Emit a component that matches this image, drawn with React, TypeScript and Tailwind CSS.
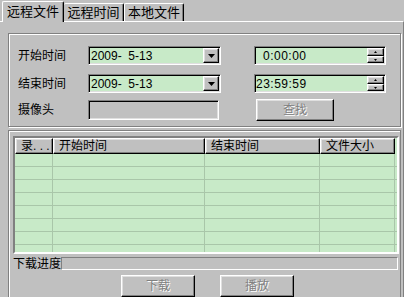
import React from 'react';

const sunken =
  'border border-t-[#808080] border-l-[#808080] border-b-white border-r-white shadow-[inset_1px_1px_0_#000,inset_-1px_-1px_0_#dfdfdf]';
const raised =
  'border border-t-white border-l-white border-b-black border-r-black shadow-[inset_-1px_-1px_0_#808080,inset_1px_1px_0_#dfdfdf]';
const etched = 'border border-[#808080] shadow-[inset_1px_1px_0_#fff,1px_1px_0_#fff]';

function DownArrow() {
  return (
    <svg width="7" height="4" viewBox="0 0 7 4">
      <path d="M0 0h7L3.5 4z" fill="#000" />
    </svg>
  );
}

function Combo({ value }: { value: string }) {
  return (
    <div className={`w-[133px] h-[19px] bg-[#c8eac8] flex items-center justify-between ${sunken}`}>
      <span className="pl-[2px] text-[12px] leading-none whitespace-pre">{value}</span>
      <div className={`w-[16px] h-[15px] mr-px bg-[#c0c0c0] flex items-center justify-center ${raised}`}>
        <DownArrow />
      </div>
    </div>
  );
}

function Spinner({ value, indent }: { value: string; indent: string }) {
  return (
    <div className={`w-[132px] h-[19px] bg-[#c8eac8] flex items-center justify-between ${sunken}`}>
      <span className={`${indent} text-[12px] leading-none tracking-[0.5px]`}>{value}</span>
      <div className="flex flex-col mr-px">
        <div className={`w-[17px] h-[8px] bg-[#c0c0c0] flex items-center justify-center ${raised}`}>
          <svg width="3" height="2" viewBox="0 0 3 2">
            <path d="M0 2h3L1.5 0z" fill="#000" />
          </svg>
        </div>
        <div className={`w-[17px] h-[7px] bg-[#c0c0c0] flex items-center justify-center ${raised}`}>
          <svg width="3" height="2" viewBox="0 0 3 2">
            <path d="M0 0h3L1.5 2z" fill="#000" />
          </svg>
        </div>
      </div>
    </div>
  );
}

function DisabledButton({ label, width }: { label: string; width: string }) {
  return (
    <div
      className={`${width} h-[22px] flex items-center justify-center bg-[#c0c0c0] text-[12px] text-[#808080] [text-shadow:1px_1px_0_#fff] ${raised}`}
    >
      {label}
    </div>
  );
}

const columns = [
  { title: '录. . .', w: 'w-[38px]' },
  { title: '开始时间', w: 'w-[152px]' },
  { title: '结束时间', w: 'w-[115px]' },
  { title: '文件大小', w: 'w-[75px]' },
];

export default function App() {
  const rows = Array.from({ length: 8 });

  return (
    <div className="w-[404px] h-[297px] overflow-hidden bg-[#c0c0c0] flex flex-col text-black [font-family:'Liberation_Sans','Noto_Sans_CJK_SC',sans-serif]">
      {/* tab strip */}
      <div className="h-[22px] pl-[2px] flex items-end">
        <div className="relative z-10 -mb-px w-[62px] h-[21px] bg-[#c0c0c0] border-l border-t border-r border-l-white border-t-white border-r-black rounded-t-[2px] shadow-[inset_-1px_0_0_#808080] flex items-start justify-center pt-[2px] text-[13px] leading-[16px]">
          远程文件
        </div>
        <div className="w-[60px] h-[18px] border-t border-r border-t-white border-r-black rounded-t-[2px] shadow-[inset_-1px_0_0_#808080] flex items-start justify-center pt-[1px] text-[13px] leading-[16px]">
          远程时间
        </div>
        <div className="w-[60px] h-[18px] border-l border-t border-r border-l-white border-t-white border-r-black rounded-t-[2px] shadow-[inset_-1px_0_0_#808080] flex items-start justify-center pt-[1px] text-[13px] leading-[16px]">
          本地文件
        </div>
      </div>

      {/* tab page */}
      <div className="flex-1 flex flex-col border-t border-t-white border-r border-r-[#808080] pl-[8px] pr-[2px] pt-[11px]">
        {/* query group */}
        <div className={`w-[393px] h-[94px] shrink-0 flex flex-col pt-[12px] pl-[9px] ${etched}`}>
          <div className="flex items-center h-[19px]">
            <span className="w-[70px] text-[12px]">开始时间</span>
            <Combo value="2009-  5-13" />
            <div className="w-[33px]" />
            <Spinner value="0:00:00" indent="pl-[8px]" />
          </div>
          <div className="flex items-center h-[19px] mt-[9px]">
            <span className="w-[70px] text-[12px]">结束时间</span>
            <Combo value="2009-  5-13" />
            <div className="w-[33px]" />
            <Spinner value="23:59:59" indent="pl-[1px]" />
          </div>
          <div className="flex items-center h-[21px] mt-[6px]">
            <span className="w-[70px] text-[12px]">摄像头</span>
            <div className={`w-[131px] h-[20px] bg-[#c0c0c0] ${sunken}`} />
            <div className="w-[37px]" />
            <DisabledButton label="查找" width="w-[78px]" />
          </div>
        </div>

        {/* result area */}
        <div className="mt-[3px] w-[393px] flex-1 flex flex-col border-t border-l border-r border-[#808080] shadow-[inset_1px_1px_0_#fff] pt-[5px] pl-[4px]">
          <div className="w-[386px] h-[118px] shrink-0 bg-[#c8eac8] overflow-hidden flex flex-col border-2 border-t-[#808080] border-l-[#808080] border-b-white border-r-white">
            <div className="flex h-[16px] shrink-0 bg-[#c0c0c0] w-fit">
              {columns.map((c) => (
                <div
                  key={c.title}
                  className={`${c.w} h-[16px] flex items-center pl-[5px] text-[12px] leading-none whitespace-pre ${raised}`}
                >
                  {c.title}
                </div>
              ))}
            </div>
            {rows.map((_, i) => (
              <div key={i} className="flex h-[13px] shrink-0 border-b border-b-[#a9c6a9]">
                {columns.map((c) => (
                  <div key={c.title} className={`${c.w} h-full border-r border-r-[#a9c6a9]`} />
                ))}
              </div>
            ))}
          </div>

          <div className="flex items-center h-[13px] mt-[3px]">
            <span className="w-[48px] text-[12px] leading-none">下载进度</span>
            <div className="w-[337px] h-[13px] border border-t-[#808080] border-l-[#808080] border-b-white border-r-white" />
          </div>

          <div className="flex mt-[5px] pl-[108px] gap-[25px]">
            <DisabledButton label="下载" width="w-[74px]" />
            <DisabledButton label="播放" width="w-[74px]" />
          </div>
        </div>
      </div>
    </div>
  );
}
